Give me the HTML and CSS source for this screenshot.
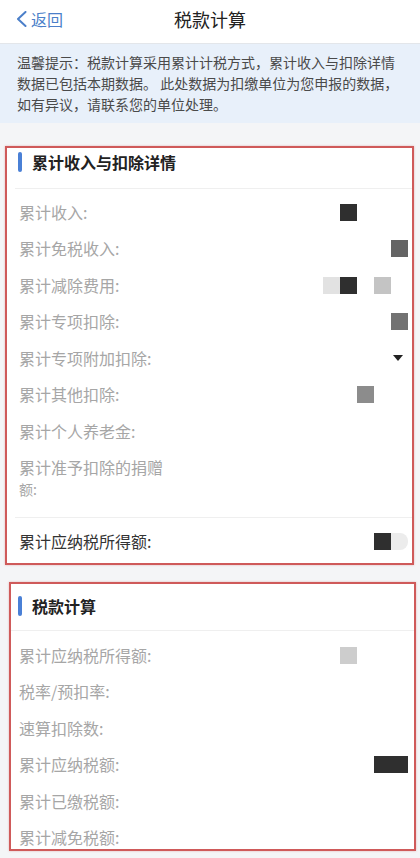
FILE: index.html
```html
<!DOCTYPE html>
<html lang="zh-CN">
<head>
  <meta charset="UTF-8" />
  <meta name="viewport" content="width=device-width, initial-scale=1.0" />
  <title>税款计算</title>
  <link rel="stylesheet" href="styles.css">
</head>
<body>
  <div class="nav">
    <a class="back">
      <svg width="11" height="16" viewBox="0 0 11 16"><path d="M9.5 1 L2 8 L9.5 15" fill="none" stroke="#4b7fc9" stroke-width="2" stroke-linecap="round" stroke-linejoin="round"/></svg>
      <span>返回</span>
    </a>
    <div class="nav-title">税款计算</div>
    <div></div>
  </div>

  <div class="notice">
    温馨提示：税款计算采用累计计税方式，累计收入与扣除详情<br>
    数据已包括本期数据。 此处数据为扣缴单位为您申报的数据，<br>
    如有异议，请联系您的单位处理。
  </div>

  <section class="card card-detail">
    <div class="card-head"><span class="bar"></span>累计收入与扣除详情</div>
    <div class="line"></div>
    <div class="rows">
      <div class="row">
        <span class="label">累计收入:</span>
        <span class="val"><i class="px c-dark"></i><i class="px"></i><i class="px"></i><i class="px"></i></span>
      </div>
      <div class="row">
        <span class="label">累计免税收入:</span>
        <span class="val"><i class="px c-mid"></i></span>
      </div>
      <div class="row">
        <span class="label">累计减除费用:</span>
        <span class="val"><i class="px c-faint"></i><i class="px c-dark"></i><i class="px"></i><i class="px c-light"></i><i class="px"></i></span>
      </div>
      <div class="row">
        <span class="label">累计专项扣除:</span>
        <span class="val"><i class="px c-mid2"></i></span>
      </div>
      <div class="row">
        <span class="label">累计专项附加扣除:</span>
        <span class="val"><i class="px"><b class="caret"></b></i></span>
      </div>
      <div class="row">
        <span class="label">累计其他扣除:</span>
        <span class="val"><i class="px c-grey"></i><i class="px"></i><i class="px"></i></span>
      </div>
      <div class="row">
        <span class="label">累计个人养老金:</span>
      </div>
      <div class="row">
        <span class="label">累计准予扣除的捐赠<br><span class="tail">额:</span></span>
      </div>
    </div>
    <div class="line"></div>
    <div class="row row-total">
      <span class="label">累计应纳税所得额:</span>
      <span class="val"><i class="px c-dark"></i><i class="px c-blur"></i></span>
    </div>
  </section>

  <section class="card card-tax">
    <div class="card-head"><span class="bar"></span>税款计算</div>
    <div class="line"></div>
    <div class="rows">
      <div class="row">
        <span class="label">累计应纳税所得额:</span>
        <span class="val"><i class="px c-pale"></i><i class="px"></i><i class="px"></i><i class="px"></i></span>
      </div>
      <div class="row">
        <span class="label">税率/预扣率:</span>
      </div>
      <div class="row">
        <span class="label">速算扣除数:</span>
      </div>
      <div class="row">
        <span class="label">累计应纳税额:</span>
        <span class="val"><i class="px c-dark"></i><i class="px c-dark"></i></span>
      </div>
      <div class="row">
        <span class="label">累计已缴税额:</span>
      </div>
      <div class="row">
        <span class="label">累计减免税额:</span>
      </div>
    </div>
  </section>
</body>
</html>
```

FILE: styles.css
```css
* {
  box-sizing: border-box;
}

body {
  margin: 0;
  width: 420px;
  height: 858px;
  overflow: hidden;
  font-family: "Noto Sans CJK SC", "Noto Sans", sans-serif;
  background: #f4f5f7;
  color: #333;
}

.nav {
  height: 44px;
  background: #fff;
  border-bottom: 1px solid #e3e6ea;
  display: grid;
  grid-template-columns: 1fr auto 1fr;
  align-items: center;
}

.back {
  display: flex;
  align-items: center;
  gap: 4px;
  padding-left: 16px;
  padding-bottom: 5px;
  color: #4b7fc9;
  font-size: 16px;
}

.nav-title {
  font-size: 18px;
  color: #222;
  padding-bottom: 6px;
}

.notice {
  background: #e8f0fa;
  padding: 8px 17px 8px;
  font-size: 14px;
  line-height: 21px;
  color: #4a4a4a;
  white-space: nowrap;
}

.card {
  background: #fff;
  border: 2px solid #cf5a5a;
  box-shadow: 0 0 2px rgba(207, 90, 90, 0.4);
}

.card-detail {
  margin: 23px 6px 0 5px;
}

.card-tax {
  margin: 17px 4px 0 9px;
}

.card-head {
  display: flex;
  align-items: center;
  font-size: 16px;
  line-height: 20px;
  font-weight: bold;
  color: #222;
}

.card-detail .card-head {
  padding: 4px 12px 16px 11px;
}

.card-tax .card-head {
  padding: 12px 12px 14px 7px;
}

.bar {
  width: 4px;
  height: 20px;
  border-radius: 2px;
  background: #4a80d6;
  margin-right: 10px;
}

.line {
  height: 1px;
  background: #efefef;
}

.card-detail .line {
  margin-left: 8px;
}

.card-detail .rows {
  padding: 5px 4px 9px 12px;
}

.card-tax .rows {
  padding: 6px 6px 0 8px;
}

.row {
  display: flex;
  align-items: center;
  padding: 7.75px 0;
  font-size: 16px;
  line-height: 21px;
  color: #a6a6a6;
}

.card-tax .row:last-child {
  padding-bottom: 1px;
}

.label {
  width: 148px;
}

.tail {
  font-size: 14px;
}

.row-total {
  padding: 13px 4px 11px 12px;
  color: #333;
}

.val {
  margin-left: auto;
  display: flex;
}

.px {
  width: 17px;
  height: 17px;
  display: flex;
  align-items: center;
  justify-content: center;
}

.c-dark { background: #2f2f2f; }
.c-mid { background: #646464; }
.c-mid2 { background: #727272; }
.c-grey { background: #8c8c8c; }
.c-light { background: #c4c4c4; }
.c-pale { background: #cdcdcd; }
.c-faint { background: #e2e2e2; }
.c-blur { background: #ececec; border-radius: 0 8px 8px 0; }

.caret {
  width: 0;
  height: 0;
  border-left: 5px solid transparent;
  border-right: 5px solid transparent;
  border-top: 6px solid #222;
  margin-right: 4px;
}
```
